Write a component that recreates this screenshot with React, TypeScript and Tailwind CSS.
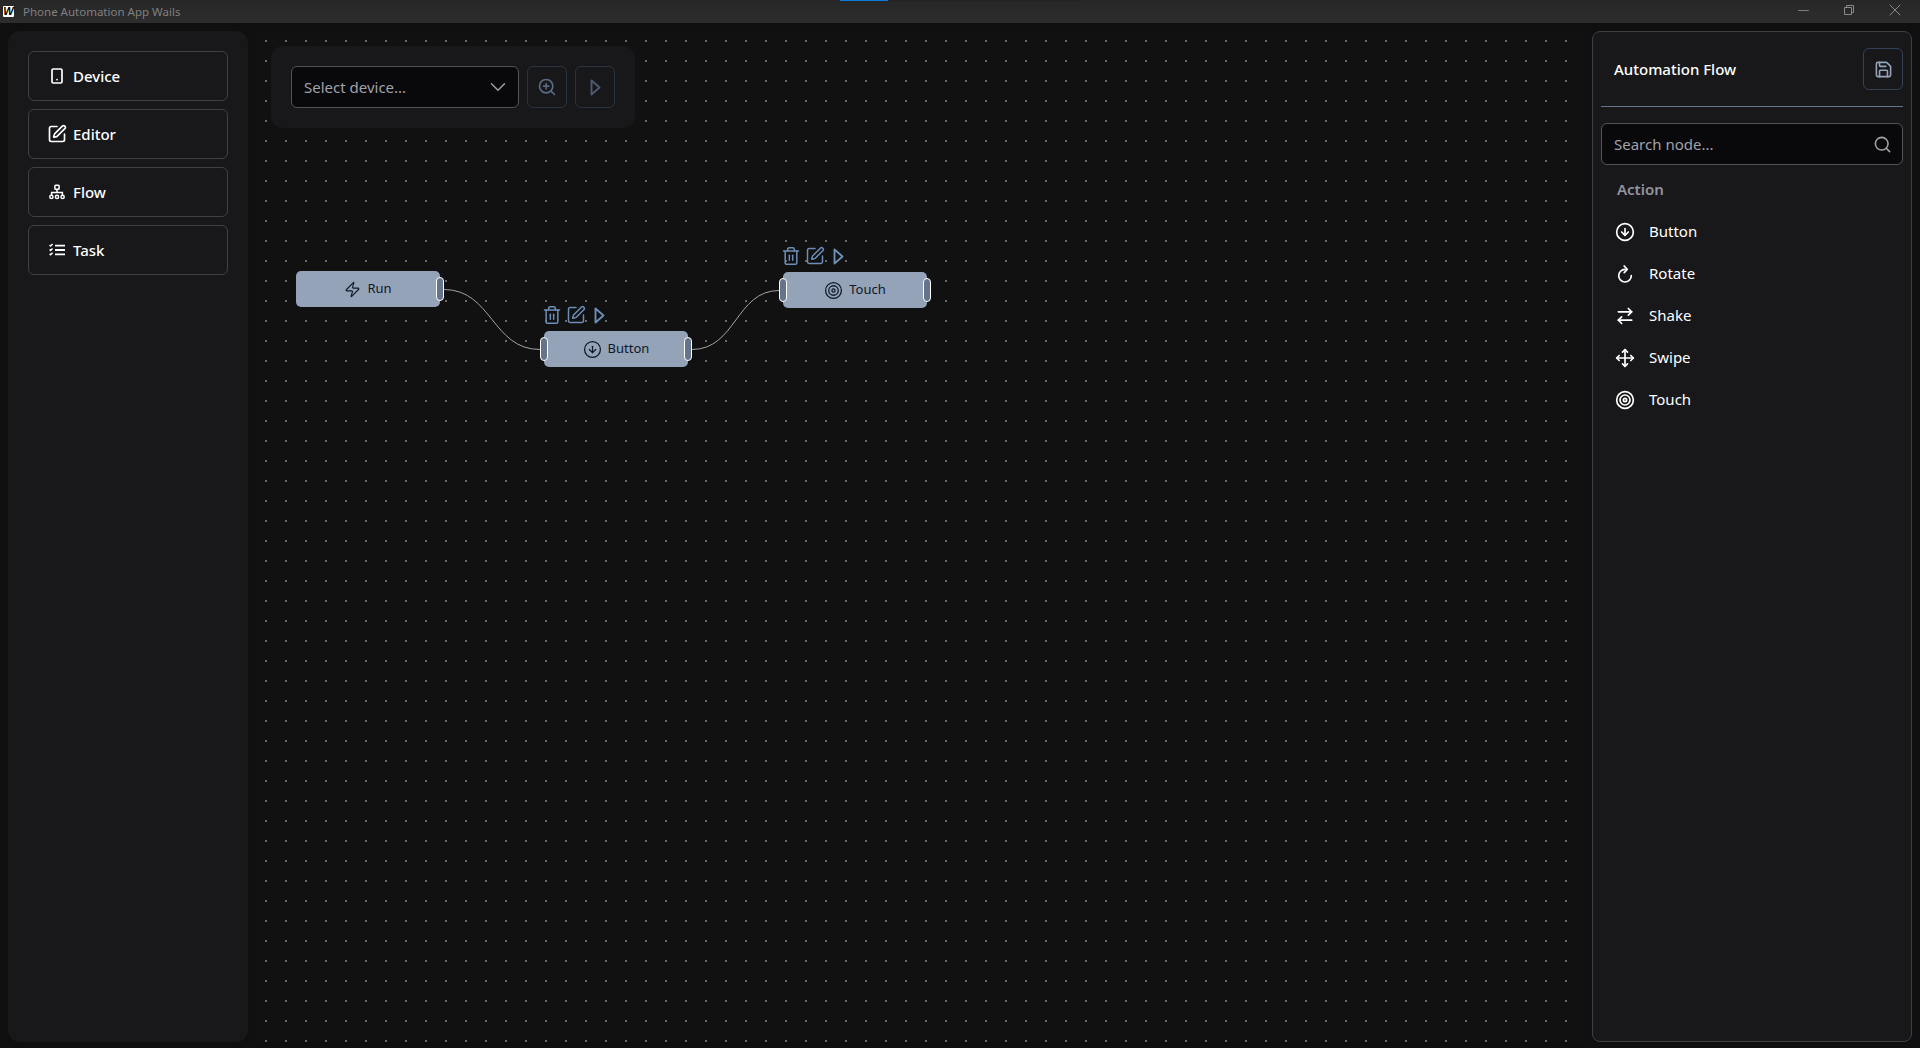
import React from 'react';
import {
  ArrowRightLeft,
  ChevronDown,
  CircleArrowDown,
  Minus,
  Move,
  Save,
  Search,
  SquarePen,
  Target,
  Trash2,
  X,
  Zap,
  ZoomIn,
} from 'lucide-react';

const DeviceIcon = () => (
  <svg width="16" height="16" viewBox="0 0 16 16" fill="none" stroke="currentColor" strokeWidth="1.7" className="shrink-0">
    <rect x="3" y="1" width="10" height="14" rx="1.2" />
    <circle cx="8" cy="11.6" r="0.9" fill="currentColor" stroke="none" />
  </svg>
);

const FlowIcon = () => (
  <svg width="16" height="16" viewBox="0 0 16 16" fill="none" stroke="currentColor" strokeWidth="1.5" className="shrink-0">
    <rect x="5.9" y="1.2" width="4.2" height="4" rx="0.8" />
    <path d="M8 5.2v3.4M2.6 11V8.6h10.8V11" />
    <circle cx="2.4" cy="12.9" r="1.6" />
    <circle cx="8" cy="12.9" r="1.6" />
    <circle cx="13.6" cy="12.9" r="1.6" />
  </svg>
);

const TaskIcon = () => (
  <svg width="16" height="16" viewBox="0 0 16 16" fill="none" stroke="currentColor" strokeWidth="1.8" className="shrink-0">
    <path d="M6 3.6h10M6 8h10M6 12.4h10" />
    <path d="M0.6 3l1 1 2-2M0.6 7.4l1 1 2-2M0.6 11.8l1 1 2-2" strokeWidth="1.4" />
  </svg>
);

const RotateIcon = () => (
  <svg width="20" height="20" viewBox="0 0 20 20" fill="none" stroke="currentColor" strokeWidth="1.7" strokeLinecap="round" strokeLinejoin="round" className="shrink-0">
    <path d="M10 5.4A6.3 6.3 0 1 0 16.3 11.7" />
    <path d="M9.2 2l3 3.4-3 3.2" />
  </svg>
);

const CaretIcon = ({ className }: { className?: string }) => (
  <svg width="11" height="17" viewBox="0 0 11 17" fill="none" stroke="currentColor" strokeWidth="1.9" strokeLinejoin="round" className={className}>
    <path d="M1.5 1.5v14l8-7z" />
  </svg>
);

const NavButton = ({ icon, label }: { icon: React.ReactNode; label: string }) => (
  <button className="flex h-[50px] w-full items-center gap-1.5 rounded-md border border-[#3f3f46] pl-[18px] text-[15px] font-medium text-white">
    <span className="flex w-5 justify-center">{icon}</span>
    {label}
  </button>
);

const FlowNode = ({
  left,
  top,
  icon,
  label,
  hasLeft = true,
  hasActions = true,
}: {
  left: string;
  top: string;
  icon: React.ReactNode;
  label: string;
  hasLeft?: boolean;
  hasActions?: boolean;
}) => (
  <div className={`absolute flex h-9 w-36 items-center justify-center gap-1.5 rounded-[5px] bg-[#94a3b8] text-[13px] text-[#0f172a] ${left} ${top}`}>
    {hasActions && (
      <div className="absolute -top-[26px] -left-0.5 flex items-center gap-1 text-[#6c8fb8]">
        <Trash2 size={20} strokeWidth={1.8} />
        <SquarePen size={20} strokeWidth={1.8} />
        <span className="-ml-px flex w-5 justify-center">
          <CaretIcon />
        </span>
      </div>
    )}
    {hasLeft && <span className="absolute top-1.5 -left-1 h-6 w-2 rounded-full border border-white bg-[#64748b]" />}
    {icon}
    {label}
    <span className="absolute top-1.5 -right-1 h-6 w-2 rounded-full border border-white bg-[#64748b]" />
  </div>
);

const actionItems = [
  { label: 'Button', icon: <CircleArrowDown size={20} /> },
  { label: 'Rotate', icon: <RotateIcon /> },
  { label: 'Shake', icon: <ArrowRightLeft size={20} /> },
  { label: 'Swipe', icon: <Move size={20} /> },
  { label: 'Touch', icon: <Target size={20} /> },
];

export default function App() {
  return (
    <div className="flex h-screen flex-col overflow-hidden bg-[#0f0f0f] font-['Noto_Sans',sans-serif] text-white">
      {/* Title bar */}
      <div className="relative flex h-[23px] shrink-0 items-center bg-gradient-to-b from-[#272727] to-[#2d2d2d] pl-[3px]">
        <div className="flex h-[11px] w-[11px] items-center justify-center rounded-[1px] bg-white font-['Liberation_Sans',sans-serif] text-[11px] leading-none font-black text-black italic">
          W
        </div>
        <span className="ml-[9px] text-[11.5px] text-[#808080]">Phone Automation App Wails</span>
        <div className="absolute top-0 left-[840px] flex h-px w-[241px] bg-[#222222]">
          <div className="h-px w-12 bg-[#0a78d7]" />
        </div>
        <div className="ml-auto flex items-center pr-0.5 pb-[3px] text-[#8a8a8a]">
          <span className="flex w-[46px] justify-center">
            <Minus size={17} strokeWidth={1.2} />
          </span>
          <span className="flex w-[46px] justify-center">
            <svg width="12" height="12" viewBox="0 0 12 12" fill="none" stroke="currentColor" strokeWidth="1">
              <path d="M1.5 3.5h7v7h-7zM3.5 3.5v-2h7v7h-2" />
            </svg>
          </span>
          <span className="flex w-[46px] justify-center">
            <X size={20} strokeWidth={1.2} />
          </span>
        </div>
      </div>

      <div className="flex min-h-0 flex-1 gap-2 px-2 pt-2 pb-1.5">
        {/* Left navigation */}
        <aside className="flex w-60 shrink-0 flex-col gap-2 rounded-xl bg-[#18181b] p-5">
          <NavButton icon={<DeviceIcon />} label="Device" />
          <NavButton icon={<SquarePen size={20} />} label="Editor" />
          <NavButton icon={<FlowIcon />} label="Flow" />
          <NavButton icon={<TaskIcon />} label="Task" />
        </aside>

        {/* Canvas */}
        <main className="relative min-w-0 flex-1 overflow-hidden bg-[#111111]">
          <svg className="absolute inset-0 h-full w-full">
            <defs>
              <pattern id="dots" width="20" height="20" patternUnits="userSpaceOnUse">
                <rect x="9" y="9" width="2" height="2" fill="#6a6a6a" />
              </pattern>
            </defs>
            <rect width="100%" height="100%" fill="url(#dots)" />
            <g fill="none" stroke="#a3a3a3" strokeWidth="1">
              <path d="M188 258.5C236 258.5 236 318.5 284 318.5" />
              <path d="M436 318.5C480 318.5 480 259.5 523 259.5" />
            </g>
          </svg>

          <div className="absolute top-[15px] left-[15px] flex gap-2 rounded-xl bg-[#18181b] p-5">
            <div className="flex h-[42px] w-[228px] items-center justify-between rounded-md border border-[#52525b] bg-[#09090b] pr-[7px] pl-3 text-[15px] text-[#a1a1aa]">
              Select device...
              <ChevronDown size={26} strokeWidth={1.3} />
            </div>
            <div className="flex h-[42px] w-10 items-center justify-center rounded-md border border-[#2a3342] text-[#5a6a80]">
              <ZoomIn size={20} />
            </div>
            <div className="flex h-[42px] w-10 items-center justify-center rounded-md border border-[#2a3342] text-[#4d5b70]">
              <CaretIcon />
            </div>
          </div>

          <FlowNode left="left-[40px]" top="top-[240px]" icon={<Zap size={17} strokeWidth={1.6} />} label="Run" hasLeft={false} hasActions={false} />
          <FlowNode left="left-[288px]" top="top-[300px]" icon={<CircleArrowDown size={19} strokeWidth={1.6} />} label="Button" />
          <FlowNode left="left-[527px]" top="top-[241px]" icon={<Target size={19} strokeWidth={1.6} />} label="Touch" />
        </main>

        {/* Right palette */}
        <aside className="flex w-80 shrink-0 flex-col rounded-lg border border-[#3f3f46] bg-[#18181b] px-2 pt-4">
          <div className="flex items-center justify-between border-b border-[#64748b] pb-4 pl-[13px]">
            <span className="text-[15px] font-medium">Automation Flow</span>
            <div className="flex h-[42px] w-10 items-center justify-center rounded-md border border-[#334155] text-[#94a3b8]">
              <Save size={19} />
            </div>
          </div>
          <div className="mt-4 flex h-[42px] items-center justify-between rounded-md border border-[#52525b] bg-[#09090b] pr-2.5 pl-3 text-[15px] text-[#a1a1aa]">
            Search node...
            <Search size={19} />
          </div>
          <div className="mt-[13px] pl-4 text-[15px] font-semibold text-[#94949d]">Action</div>
          <div className="mt-2.5 flex flex-col pl-3.5">
            {actionItems.map((item) => (
              <div key={item.label} className="flex h-[42px] items-center gap-3.5 text-[15px]">
                {item.icon}
                {item.label}
              </div>
            ))}
          </div>
        </aside>
      </div>
    </div>
  );
}
